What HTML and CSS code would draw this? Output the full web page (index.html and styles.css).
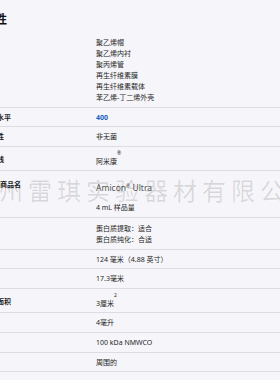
FILE: index.html
```html
<!DOCTYPE html>
<html>
<head>
<meta charset="UTF-8">
<title>属性</title>
<meta name="viewport" content="width=device-width, initial-scale=1.0">
<link rel="stylesheet" href="styles.css">
</head>
<body>

<div class="specs">
  <div class="sheet">
    <h2 class="sheet-title">属性</h2>

    <div class="spec">
      <div class="spec-name">材料</div>
      <div class="spec-value">
        <div>聚乙烯帽</div>
        <div>聚乙烯内衬</div>
        <div>聚丙烯管</div>
        <div>再生纤维素膜</div>
        <div>再生纤维素载体</div>
        <div>苯乙烯-丁二烯外壳</div>
      </div>
    </div>
    <div class="spec">
      <div class="spec-name">质量水平</div>
      <div class="spec-value"><a class="link">400</a></div>
    </div>
    <div class="spec">
      <div class="spec-name">无菌性</div>
      <div class="spec-value">非无菌</div>
    </div>
    <div class="spec spec--raised">
      <div class="spec-name">产品线</div>
      <div class="spec-value">阿米康<sup class="high">®</sup></div>
    </div>
    <div class="spec spec--brand">
      <div class="spec-name">品牌/商品名</div>
      <div class="spec-value">
        <div class="brand">Amicon<sup>®</sup> Ultra</div>
        <div>4 mL 样品量</div>
      </div>
    </div>
    <div class="spec spec--double">
      <div class="spec-name">应用</div>
      <div class="spec-value">
        <div>蛋白质提取：适合</div>
        <div>蛋白质纯化：合适</div>
      </div>
    </div>
    <div class="spec">
      <div class="spec-name">长度</div>
      <div class="spec-value">124 毫米（4.88 英寸）</div>
    </div>
    <div class="spec">
      <div class="spec-name">直径</div>
      <div class="spec-value">17.3毫米</div>
    </div>
    <div class="spec spec--raised">
      <div class="spec-name">过滤面积</div>
      <div class="spec-value">3厘米<sup class="high">2</sup></div>
    </div>
    <div class="spec">
      <div class="spec-name">容量</div>
      <div class="spec-value">4毫升</div>
    </div>
    <div class="spec">
      <div class="spec-name">孔径</div>
      <div class="spec-value">100 kDa NMWCO</div>
    </div>
    <div class="spec">
      <div class="spec-name">外形</div>
      <div class="spec-value">周围的</div>
    </div>
  </div>

  <!-- company stamp laid over the table -->
  <div class="watermark">广州雷琪实验器材有限公司</div>
</div>

</body>
</html>
```

FILE: styles.css
```css
body {
  margin: 0;
  padding: 0;
  background-color: #f6f6fa;
  color: #222;
  font-family: "Noto Sans", "Noto Sans CJK SC", sans-serif;
  -webkit-font-smoothing: antialiased;
}
.specs {
  position: relative;
  height: 380px;
  overflow: hidden;
}
/* the sheet is scrolled a little to the right, so labels start off-screen */
.sheet {
  margin-left: -17px;
  padding-top: 12px;
}
.sheet-title {
  margin: 0 0 5px;
  font-size: 12px;
  line-height: 16px;
  font-weight: 700;
  color: #111;
}
.spec {
  display: grid;
  grid-template-columns: 113px 1fr;
  padding: 4px 0 3.6px;
  border-bottom: 1px solid #dcdce3;
  font-size: 7px;
  line-height: 11px;
}
.spec-name {
  font-weight: 700;
  color: #1a1a1a;
}
.spec-value {
  color: #262626;
}
.link {
  color: #1a5fc0;
  font-weight: 700;
  text-decoration: none;
}
sup {
  font-size: 5px;
  line-height: 5px;
  vertical-align: 3px;
}
sup.high {
  vertical-align: 9px;
}
.spec--raised .spec-name {
  padding-top: 3px;
}
.spec--brand .spec-name {
  padding-top: 4px;
}
.brand {
  margin: 3px 0 4px;
  font-size: 8.5px;
  line-height: 20px;
  color: #555;
}
.spec--double {
  padding-top: 5px;
}
.watermark {
  position: absolute;
  top: 178px;
  left: -30px;
  font-family: "Noto Sans CJK SC", sans-serif;
  font-size: 24px;
  line-height: 24px;
  letter-spacing: 5px;
  white-space: nowrap;
  color: rgba(0, 0, 0, 0.12);
  pointer-events: none;
}
```
